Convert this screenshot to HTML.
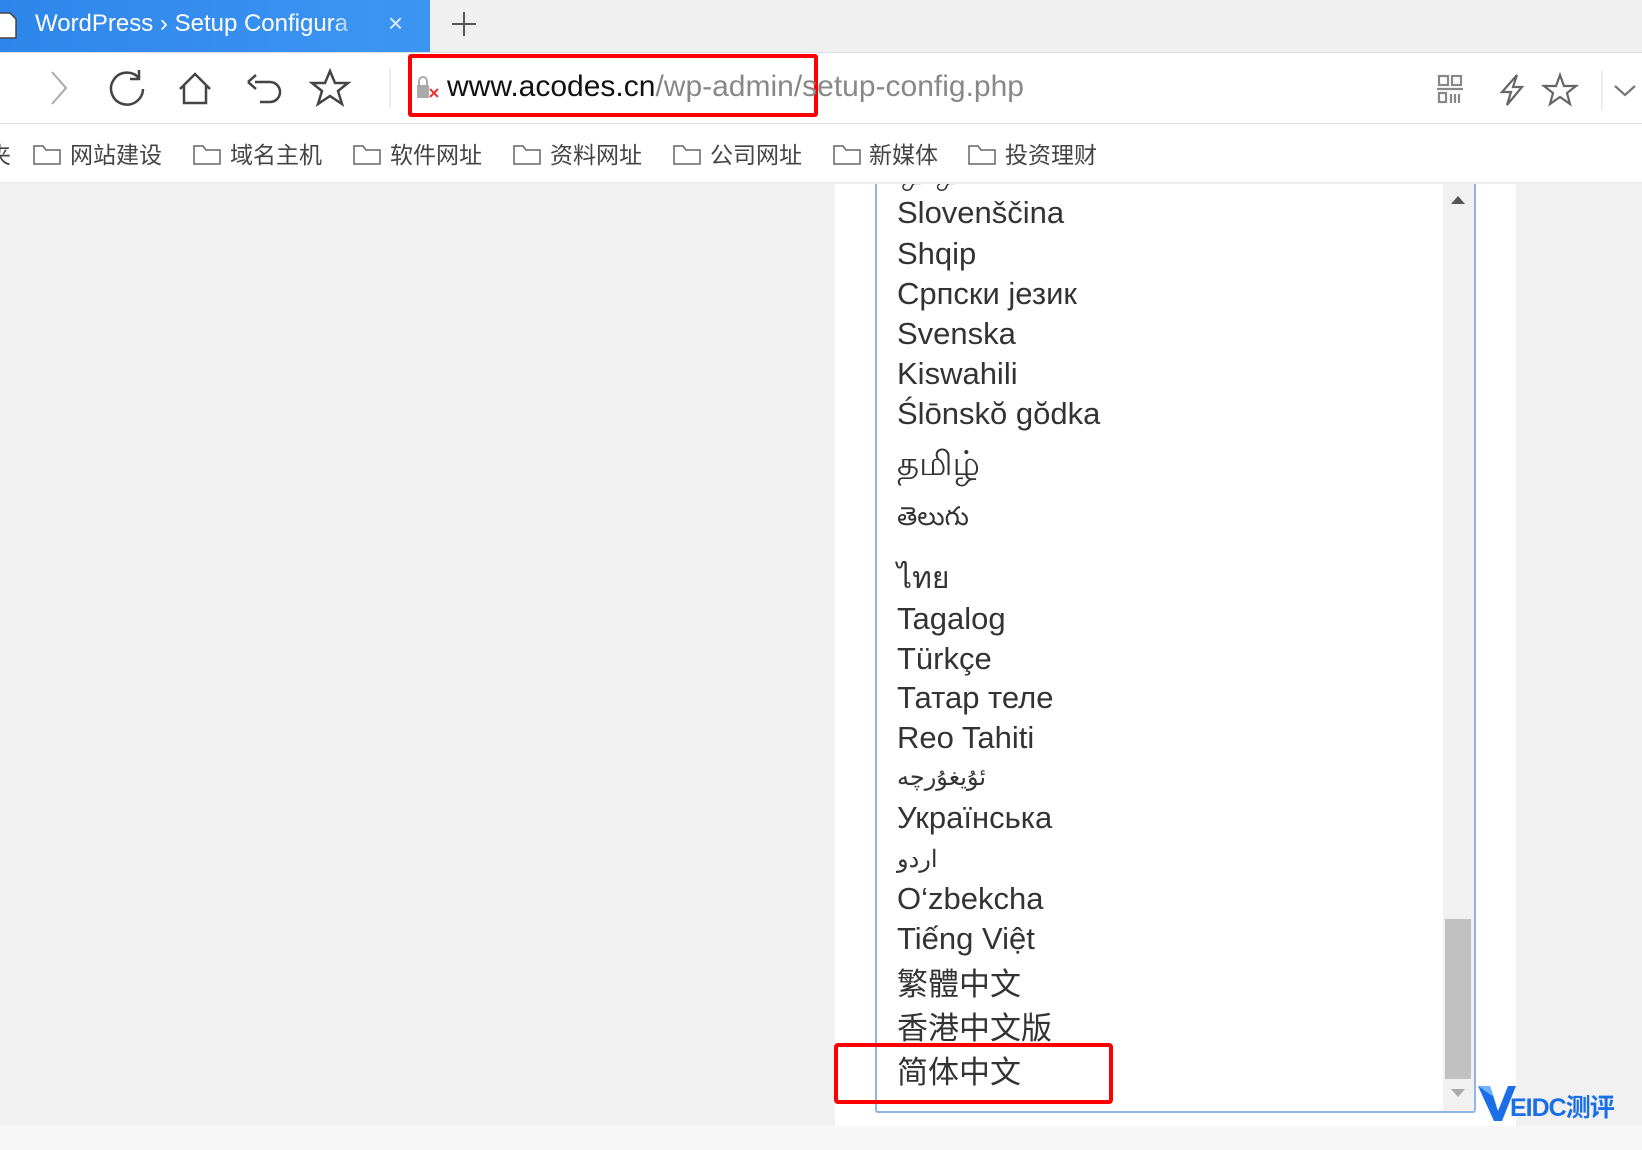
<!DOCTYPE html>
<html><head><meta charset="utf-8"><style>
*{margin:0;padding:0;box-sizing:border-box}
body{width:1642px;height:1150px;overflow:hidden;background:#f1f1f1;font-family:"Liberation Sans","Noto Sans CJK SC",sans-serif;position:relative}
.a{position:absolute;white-space:nowrap}
.it{position:absolute;left:20px;font-size:31px;color:#333;line-height:40px;transform:translateY(-20px)}
.bm{position:absolute;top:142px;font-size:23px;color:#444;line-height:26px}
.fd{position:absolute;top:143px;width:28px;height:22px}
</style></head><body>
<div class="a" style="left:0;top:0;width:1642px;height:52px;background:#f0f0f0"></div>
<div class="a" style="left:0;top:0;width:430px;height:52px;background:linear-gradient(90deg,#2f86ea,#3d95f3)"></div>
<svg class="a" style="left:0;top:10px" width="18" height="30"><path d="M-2 3H10L16 9V28H-2Z" fill="#fff" stroke="#444" stroke-width="1.5"/></svg>
<div class="a" style="left:35px;top:10px;font-size:24px;color:#fff">WordPress › Setup Configura</div>
<div class="a" style="left:330px;top:0;width:50px;height:52px;background:linear-gradient(90deg,rgba(61,149,243,0),#3d95f3 80%)"></div>
<div class="a" style="left:388px;top:8px;font-size:26px;color:#dfeaff">×</div>
<svg class="a" style="left:450px;top:10px" width="28" height="28"><path d="M14 2V26M2 14H26" stroke="#555" stroke-width="2"/></svg>
<div class="a" style="left:0;top:52px;width:1642px;height:72px;background:#fff;border-top:1px solid #ddd;border-bottom:1px solid #e2e2e2"></div>
<svg class="a" style="left:0;top:62px" width="400" height="52" fill="none" stroke="#444" stroke-width="2.5">
<path d="M52 10L66 26L52 42" stroke="#aaa" stroke-width="2"/>
<path d="M139 16A16 16 0 1 0 143 27M139 8V17H130"/>
<path d="M180 27L195 12L210 27M184 24V41H206V24" />
<path d="M255 20H270A10 10 0 0 1 270 40H260M248 20L256 13M248 20L256 27"/>
<path d="M330 9L335 21L348 21L338 29L342 42L330 34L318 42L322 29L312 21L325 21Z"/>
<path d="M390 6V46" stroke="#e5e5e5" stroke-width="1.5"/>
</svg>
<div class="a" style="left:408px;top:54px;width:410px;height:63px;border:4px solid #f00;border-radius:3px"></div>
<svg class="a" style="left:415px;top:74px" width="28" height="28"><rect x="2" y="11" width="12" height="13" fill="#aaa"/><path d="M4 11V7A4 4 0 0 1 12 7V11" stroke="#aaa" stroke-width="2" fill="none"/><path d="M15 15L23 23M23 15L15 23" stroke="#e33" stroke-width="2"/></svg>
<div class="a" style="left:447px;top:70px;font-size:30px;color:#888"><span style="color:#111">www.acodes.cn</span>/wp-admin/setup-config.php</div>
<svg class="a" style="left:1430px;top:70px" width="212" height="40" fill="none" stroke="#888" stroke-width="2.2">
<rect x="9" y="6" width="9" height="9"/><rect x="22" y="6" width="9" height="9"/><path d="M7 19H33"/><rect x="9" y="23" width="7" height="9"/><path d="M21 24V33M25 24V33M29 24V33" />
<path d="M87 5L72 22H81L77 35L92 17H83Z" stroke="#666"/>
<path d="M130 5L134 16L146 16L137 23L140 34L130 27L120 34L123 23L114 16L126 16Z" stroke="#666"/>
<path d="M172 -4V44" stroke="#e5e5e5" stroke-width="1.5"/>
<path d="M185 16L195 25L205 16" stroke="#777"/>
</svg>
<div class="a" style="left:0;top:124px;width:1642px;height:59px;background:#fff;border-bottom:1px solid #e6e6e6"></div>
<div class="bm" style="left:-12px">夹</div>
<svg class="fd" style="left:33px"><path d="M1 3H10L13 7H27V21H1Z" fill="none" stroke="#666" stroke-width="1.5"/></svg><div class="bm" style="left:70px">网站建设</div>
<svg class="fd" style="left:193px"><path d="M1 3H10L13 7H27V21H1Z" fill="none" stroke="#666" stroke-width="1.5"/></svg><div class="bm" style="left:230px">域名主机</div>
<svg class="fd" style="left:353px"><path d="M1 3H10L13 7H27V21H1Z" fill="none" stroke="#666" stroke-width="1.5"/></svg><div class="bm" style="left:390px">软件网址</div>
<svg class="fd" style="left:513px"><path d="M1 3H10L13 7H27V21H1Z" fill="none" stroke="#666" stroke-width="1.5"/></svg><div class="bm" style="left:550px">资料网址</div>
<svg class="fd" style="left:673px"><path d="M1 3H10L13 7H27V21H1Z" fill="none" stroke="#666" stroke-width="1.5"/></svg><div class="bm" style="left:710px">公司网址</div>
<svg class="fd" style="left:833px"><path d="M1 3H10L13 7H27V21H1Z" fill="none" stroke="#666" stroke-width="1.5"/></svg><div class="bm" style="left:869px">新媒体</div>
<svg class="fd" style="left:968px"><path d="M1 3H10L13 7H27V21H1Z" fill="none" stroke="#666" stroke-width="1.5"/></svg><div class="bm" style="left:1005px">投资理财</div>
<div class="a" style="left:0;top:1126px;width:1642px;height:24px;background:#f7f7f7"></div>
<div class="a" style="left:835px;top:184px;width:681px;height:942px;background:#fff"></div>
<div class="a" style="left:875px;top:184px;width:601px;height:929px;border:2px solid #8fb3ec;border-top:none;border-radius:0 0 3px 3px;overflow:hidden">
<div class="a" style="left:566px;top:0;width:31px;height:927px;background:#f1f1f1"></div>
<div class="a" style="left:568px;top:735px;width:26px;height:160px;background:#c1c1c1"></div>
<div class="a" style="left:574px;top:12px;width:0;height:0;border-left:7px solid transparent;border-right:7px solid transparent;border-bottom:8px solid #555"></div>
<div class="a" style="left:574px;top:905px;width:0;height:0;border-left:7px solid transparent;border-right:7px solid transparent;border-top:8px solid #aaa"></div>
<div class="it" style="top:-12px">ஒ ஒ</div>
<div class="it" style="top:29px">Slovenščina</div>
<div class="it" style="top:70px">Shqip</div>
<div class="it" style="top:110px">Српски језик</div>
<div class="it" style="top:150px">Svenska</div>
<div class="it" style="top:190px">Kiswahili</div>
<div class="it" style="top:230px">Ślōnskŏ gŏdka</div>
<div class="it" style="top:280px;font-size:34px">தமிழ்</div>
<div class="it" style="top:332px;font-size:26px">తెలుగు</div>
<div class="it" style="top:395px;font-size:30px">ไทย</div>
<div class="it" style="top:435px">Tagalog</div>
<div class="it" style="top:475px">Türkçe</div>
<div class="it" style="top:514px">Татар теле</div>
<div class="it" style="top:554px">Reo Tahiti</div>
<div class="it" style="top:594px;font-size:24px">ئۇيغۇرچە</div>
<div class="it" style="top:634px">Українська</div>
<div class="it" style="top:676px;font-size:24px">اردو</div>
<div class="it" style="top:715px">O‘zbekcha</div>
<div class="it" style="top:755px">Tiếng Việt</div>
<div class="it" style="top:801px">繁體中文</div>
<div class="it" style="top:845px">香港中文版</div>
<div class="it" style="top:889px">简体中文</div>
</div>
<div class="a" style="left:834px;top:1043px;width:279px;height:61px;border:4px solid #f00;border-radius:4px"></div>
<svg class="a" style="left:1476px;top:1083px" width="40" height="40"><path d="M2 3H14L22 28L32 3H40L26 38H18Z" fill="#1a6fe8"/><path d="M2 3H14L18 14Z" fill="#6fb2ff"/></svg>
<div class="a" style="left:1510px;top:1088px;font-size:25px;font-weight:bold;color:#1a6fe8;letter-spacing:-1px">EIDC测评</div>
</body></html>
